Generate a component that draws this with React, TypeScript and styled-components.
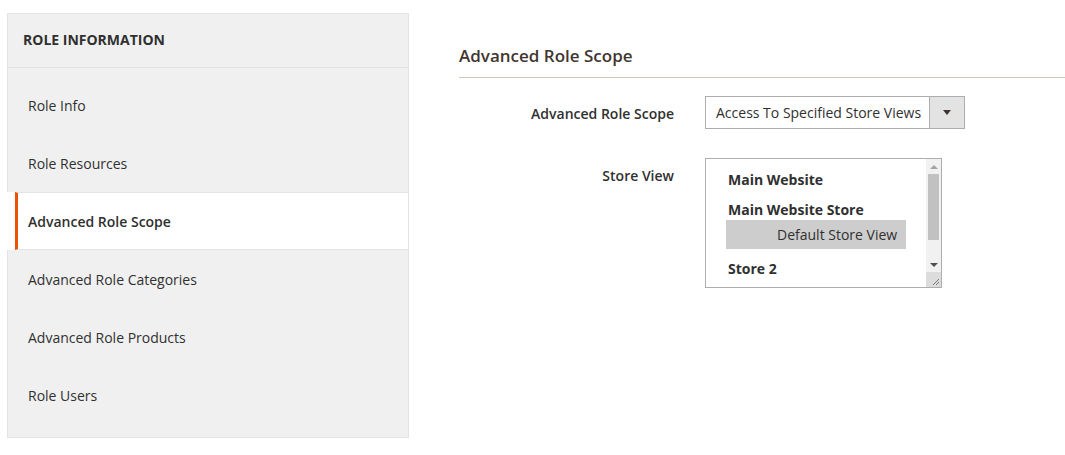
import styled, { createGlobalStyle } from "styled-components";

const GlobalStyle = createGlobalStyle`
  body {
    margin: 0;
    background: #ffffff;
    font-family: "Open Sans", "Liberation Sans", sans-serif;
    color: #303030;
  }
`;

const Page = styled.div`
  display: flex;
  align-items: flex-start;
  gap: 50px;
  padding: 13px 0 0 7px;
`;

const Sidebar = styled.nav`
  width: 402px;
  box-sizing: border-box;
  background: #f0f0f0;
  border: 1px solid #e3e3e3;
  padding-bottom: 13px;
`;

const SidebarTitle = styled.div`
  height: 54px;
  box-sizing: border-box;
  display: flex;
  align-items: center;
  padding: 0 0 2px 15px;
  border-bottom: 1px solid #e3e3e3;
  font-size: 14px;
  font-weight: 700;
  text-transform: uppercase;
  color: #303030;
`;

const NavList = styled.ul`
  list-style: none;
  margin: 0;
  padding: 8px 0 0;
`;

const NavItem = styled.li<{ $active?: boolean }>`
  height: 58px;
  box-sizing: border-box;
  display: flex;
  align-items: center;
  margin-left: 7px;
  padding-left: 10px;
  border-left: 3px solid ${(p) => (p.$active ? "#eb5202" : "transparent")};
  border-top: 1px solid ${(p) => (p.$active ? "#e3e3e3" : "transparent")};
  border-bottom: 1px solid ${(p) => (p.$active ? "#e3e3e3" : "transparent")};
  background: ${(p) => (p.$active ? "#ffffff" : "transparent")};
  box-shadow: ${(p) => (p.$active ? "-8px 0 0 #ffffff" : "none")};
  font-size: 14px;
  font-weight: ${(p) => (p.$active ? 600 : 400)};
  color: #303030;
`;

const Main = styled.main`
  flex: 1;
  margin-top: 33px;
`;

const Legend = styled.h2`
  margin: 0 0 18px;
  padding-bottom: 11px;
  border-bottom: 1px solid #ccc6bb;
  font-size: 17px;
  line-height: 20px;
  font-weight: 600;
  color: #41362f;
`;

const Fields = styled.div`
  display: flex;
  flex-direction: column;
  gap: 29px;
`;

const Field = styled.div`
  display: grid;
  grid-template-columns: 215px auto;
  column-gap: 31px;
  align-items: start;
`;

const Label = styled.label`
  padding-top: 8px;
  text-align: right;
  font-size: 14px;
  line-height: 20px;
  font-weight: 600;
  color: #303030;
`;

const Select = styled.div`
  width: 260px;
  height: 33px;
  box-sizing: border-box;
  display: flex;
  border: 1px solid #adadad;
  background: #ffffff;
`;

const SelectValue = styled.div`
  flex: 1;
  display: flex;
  align-items: center;
  padding-left: 10px;
  font-size: 14px;
  color: #303030;
`;

const SelectArrow = styled.div`
  width: 34px;
  display: flex;
  align-items: center;
  justify-content: center;
  background: #e3e3e3;
  border-left: 1px solid #adadad;

  &::after {
    content: "";
    border-left: 4px solid transparent;
    border-right: 4px solid transparent;
    border-top: 5px solid #41362f;
  }
`;

const MultiSelect = styled.div`
  width: 237px;
  height: 130px;
  box-sizing: border-box;
  display: flex;
  border: 1px solid #adadad;
  background: #ffffff;
`;

const Options = styled.div`
  flex: 1;
  padding: 11px 0 0 20px;
  overflow: hidden;
`;

const GroupLabel = styled.div`
  height: 20px;
  line-height: 20px;
  padding-left: 2px;
  font-size: 14px;
  font-weight: 700;
  color: #303030;

  & + & {
    margin-top: 10px;
  }
`;

const Option = styled.div<{ $selected?: boolean }>`
  width: 180px;
  height: 29px;
  box-sizing: border-box;
  display: flex;
  align-items: center;
  padding-left: 51px;
  background: ${(p) => (p.$selected ? "#cdcdcd" : "transparent")};
  font-size: 14px;
  color: #303030;

  & + ${GroupLabel} {
    margin-top: 10px;
  }
`;

const Scrollbar = styled.div`
  width: 15px;
  display: flex;
  flex-direction: column;
`;

const Track = styled.div`
  flex: 1;
  display: flex;
  flex-direction: column;
  background: #f1f1f1;
`;

const ArrowButton = styled.div<{ $down?: boolean; $disabled?: boolean }>`
  height: 15px;
  display: flex;
  align-items: center;
  justify-content: center;

  &::after {
    content: "";
    border-left: 4px solid transparent;
    border-right: 4px solid transparent;
    ${(p) => (p.$down ? "border-top" : "border-bottom")}: 4px solid
      ${(p) => (p.$disabled ? "#a3a3a3" : "#505050")};
  }
`;

const Thumb = styled.div`
  height: 66px;
  margin: 0 2px;
  background: #c1c1c1;
`;

const Spacer = styled.div`
  flex: 1;
`;

const Corner = styled.div`
  height: 15px;
  background: #dcdcdc;
  display: flex;
  align-items: flex-end;
  justify-content: flex-end;
`;

const navItems = [
  "Role Info",
  "Role Resources",
  "Advanced Role Scope",
  "Advanced Role Categories",
  "Advanced Role Products",
  "Role Users",
];

export default function App() {
  return (
    <>
      <GlobalStyle />
      <Page>
        <Sidebar>
          <SidebarTitle>Role Information</SidebarTitle>
          <NavList>
            {navItems.map((item) => (
              <NavItem key={item} $active={item === "Advanced Role Scope"}>
                {item}
              </NavItem>
            ))}
          </NavList>
        </Sidebar>
        <Main>
          <Legend>Advanced Role Scope</Legend>
          <Fields>
            <Field>
              <Label>Advanced Role Scope</Label>
              <Select>
                <SelectValue>Access To Specified Store Views</SelectValue>
                <SelectArrow />
              </Select>
            </Field>
            <Field>
              <Label>Store View</Label>
              <MultiSelect>
                <Options>
                  <GroupLabel>Main Website</GroupLabel>
                  <GroupLabel>Main Website Store</GroupLabel>
                  <Option $selected>Default Store View</Option>
                  <GroupLabel>Store 2</GroupLabel>
                </Options>
                <Scrollbar>
                  <Track>
                    <ArrowButton $disabled />
                    <Thumb />
                    <Spacer />
                    <ArrowButton $down />
                  </Track>
                  <Corner>
                    <svg width="15" height="15" viewBox="0 0 15 15">
                      <path d="M13 7 L7 13 M13 10 L10 13" stroke="#7a7a7a" strokeWidth="1" fill="none" />
                    </svg>
                  </Corner>
                </Scrollbar>
              </MultiSelect>
            </Field>
          </Fields>
        </Main>
      </Page>
    </>
  );
}
